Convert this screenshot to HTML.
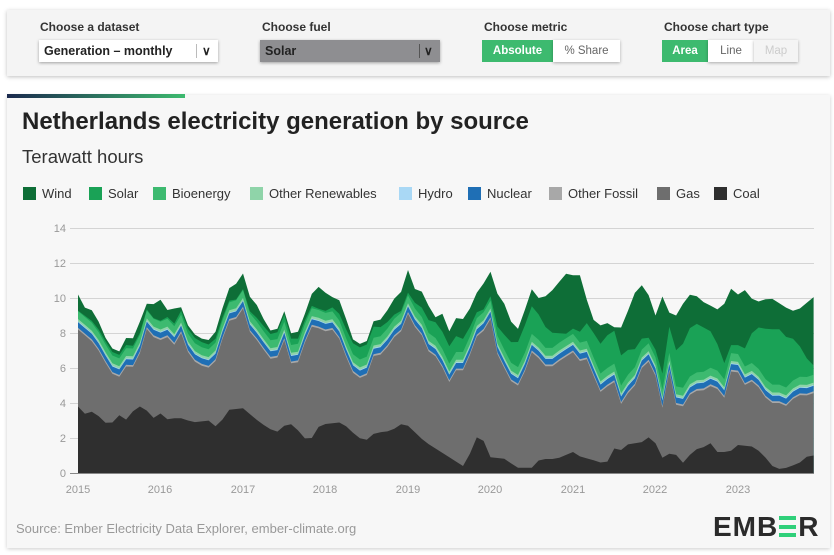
<!DOCTYPE html>
<html><head><meta charset="utf-8"><style>
body{margin:0;width:834px;height:555px;background:#fff;font-family:"Liberation Sans",sans-serif;position:relative;overflow:hidden}
.abs{position:absolute}
.panel{left:7px;top:10px;width:823px;height:66px;background:#f4f4f4;box-shadow:0 1px 4px rgba(0,0,0,.25)}
.lbl{font-size:12px;font-weight:bold;color:#333;top:20px}
.dd{top:40px;height:22px;box-shadow:0 1px 3px rgba(0,0,0,.35);font-size:12.5px;font-weight:bold;line-height:22px;padding-left:5px;box-sizing:border-box}
.btn{top:40px;height:22px;font-size:11.5px;font-weight:bold;line-height:22px;text-align:center;box-sizing:border-box}
.card{left:7px;top:95px;width:823px;height:453px;background:#f7f7f7;box-shadow:0 1px 4px rgba(0,0,0,.2)}
.leg{top:186px;font-size:13px;color:#333}
.sq{display:inline-block;width:13px;height:13px;vertical-align:-2px;margin-right:6px}
</style></head><body>
<div class="abs panel"></div>
<div class="abs lbl" style="left:40px">Choose a dataset</div>
<div class="abs lbl" style="left:262px">Choose fuel</div>
<div class="abs lbl" style="left:484px">Choose metric</div>
<div class="abs lbl" style="left:664px">Choose chart type</div>
<div class="abs dd" style="left:39px;width:179px;background:#fff;color:#222">Generation – monthly<span style="position:absolute;left:157px;top:4px;height:14px;border-left:1px solid #bbb"></span><span style="position:absolute;left:163px;top:0;font-size:12px">&#8744;</span></div>
<div class="abs dd" style="left:260px;width:180px;background:#8e8e91;color:#222">Solar<span style="position:absolute;left:159px;top:4px;height:14px;border-left:1px solid #555"></span><span style="position:absolute;left:164px;top:0;font-size:12px">&#8744;</span></div>
<div class="abs btn" style="left:482px;width:71px;background:#3dba6f;color:#fff">Absolute</div>
<div class="abs btn" style="left:553px;width:67px;background:#fff;color:#666;font-weight:normal;box-shadow:0 1px 3px rgba(0,0,0,.3)">% Share</div>
<div class="abs btn" style="left:662px;width:46px;background:#3dba6f;color:#fff">Area</div>
<div class="abs btn" style="left:708px;width:46px;background:#fff;color:#666;font-weight:normal;box-shadow:0 1px 3px rgba(0,0,0,.3)">Line</div>
<div class="abs btn" style="left:754px;width:44px;background:#f4f4f4;color:#ccc;font-weight:normal;box-shadow:0 1px 3px rgba(0,0,0,.3)">Map</div>
<div class="abs card"></div>
<div class="abs" style="left:7px;top:94px;width:178px;height:4px;background:linear-gradient(90deg,#1b2a4e,#3dba6f)"></div>
<div class="abs" style="left:22px;top:108px;font-size:24px;font-weight:bold;color:#222">Netherlands electricity generation by source</div>
<div class="abs" style="left:22px;top:146px;font-size:18.5px;color:#333">Terawatt hours</div>
<div class="abs leg" style="left:23px"><span class="sq" style="background:#0e6e37"></span>Wind</div>
<div class="abs leg" style="left:89px"><span class="sq" style="background:#1aa256"></span>Solar</div>
<div class="abs leg" style="left:153px"><span class="sq" style="background:#3dba70"></span>Bioenergy</div>
<div class="abs leg" style="left:250px"><span class="sq" style="background:#8fd4a9"></span>Other Renewables</div>
<div class="abs leg" style="left:399px"><span class="sq" style="background:#a9d8f5"></span>Hydro</div>
<div class="abs leg" style="left:468px"><span class="sq" style="background:#1f6fb5"></span>Nuclear</div>
<div class="abs leg" style="left:549px"><span class="sq" style="background:#a8a8a8"></span>Other Fossil</div>
<div class="abs leg" style="left:657px"><span class="sq" style="background:#6e6e6e"></span>Gas</div>
<div class="abs leg" style="left:714px"><span class="sq" style="background:#2f2f2f"></span>Coal</div>
<svg class="abs" style="left:0;top:0" width="834" height="555" id="ch" xmlns="http://www.w3.org/2000/svg">
<g font-family="Liberation Sans,sans-serif" font-size="11" fill="#999" text-anchor="end">
<text x="66" y="477">0</text><text x="66" y="442">2</text><text x="66" y="407">4</text><text x="66" y="372">6</text><text x="66" y="337">8</text><text x="66" y="302">10</text><text x="66" y="267">12</text><text x="66" y="232">14</text>
</g>
<g stroke="#d4d4d4" stroke-width="1">
<line x1="70" x2="814" y1="228.5" y2="228.5"/><line x1="70" x2="814" y1="263.5" y2="263.5"/><line x1="70" x2="814" y1="298.5" y2="298.5"/><line x1="70" x2="814" y1="333.5" y2="333.5"/><line x1="70" x2="814" y1="368.5" y2="368.5"/><line x1="70" x2="814" y1="403.5" y2="403.5"/><line x1="70" x2="814" y1="438.5" y2="438.5"/>
</g>
<g id="areas"></g>
<line x1="70" x2="814" y1="473.5" y2="473.5" stroke="#888"/>
<g font-family="Liberation Sans,sans-serif" font-size="11" fill="#999" text-anchor="middle">
<text x="78" y="493">2015</text><text x="160" y="493">2016</text><text x="243" y="493">2017</text><text x="325" y="493">2018</text><text x="408" y="493">2019</text><text x="490" y="493">2020</text><text x="573" y="493">2021</text><text x="655" y="493">2022</text><text x="738" y="493">2023</text>
</g>
</svg>
<div class="abs" style="left:16px;top:521px;font-size:13px;color:#999">Source: Ember Electricity Data Explorer, ember-climate.org</div>
<div class="abs" style="left:713px;top:511px;font-size:28px;font-weight:bold;color:#2b2b2b;letter-spacing:1px;white-space:nowrap">EMB<span style="display:inline-block;width:18px;height:21px;position:relative;vertical-align:-1px;margin:0 1px"><i style="position:absolute;left:0;top:0;width:17px;height:4px;background:#2fd07a"></i><i style="position:absolute;left:0;top:8.5px;width:17px;height:4px;background:#2fd07a"></i><i style="position:absolute;left:0;top:17px;width:17px;height:4px;background:#2fd07a"></i></span>R</div>
<script>
(function(){
function P(a){var o=[];for(var i=0;i<a.length;i+=2)o.push([a[i],a[i+1]]);return o}
var coal=P([2015.0,3.8,2015.1,3.3,2015.2,3.6,2015.3,2.9,2015.4,2.8,2015.5,3.3,2015.6,3.0,2015.7,3.8,2015.8,3.8,2015.9,3.1,2016.0,3.4,2016.1,3.0,2016.2,3.2,2016.4,2.9,2016.6,3.0,2016.7,2.5,2016.8,3.6,2017.0,3.7,2017.2,2.9,2017.4,2.3,2017.5,2.7,2017.6,2.8,2017.8,1.7,2017.9,2.6,2018.0,2.8,2018.2,2.9,2018.4,2.0,2018.5,1.9,2018.6,2.3,2018.8,2.4,2018.9,2.8,2019.0,2.7,2019.2,1.8,2019.4,1.2,2019.5,0.9,2019.6,0.6,2019.7,0.3,2019.8,1.9,2019.85,2.1,2019.95,1.7,2020.0,0.9,2020.2,0.8,2020.3,0.3,2020.5,0.3,2020.6,0.8,2020.8,0.8,2021.0,1.2,2021.1,0.9,2021.2,0.8,2021.4,0.5,2021.5,1.4,2021.6,1.3,2021.7,1.8,2021.8,1.6,2021.9,2.1,2022.0,1.7,2022.1,0.7,2022.2,1.3,2022.35,0.5,2022.45,1.3,2022.6,1.5,2022.7,1.8,2022.75,1.2,2022.9,1.2,2023.0,1.6,2023.2,1.5,2023.35,0.8,2023.45,0.2,2023.6,0.3,2023.75,0.6,2023.85,1.0,2024,1.0]);
var gas=P([2015.0,8.3,2015.1,7.9,2015.2,7.5,2015.3,6.7,2015.4,5.8,2015.5,5.6,2015.6,6.3,2015.7,6.1,2015.8,7.8,2015.85,8.6,2015.95,7.5,2016.0,7.7,2016.1,7.9,2016.15,7.3,2016.25,8.1,2016.35,6.8,2016.45,6.3,2016.6,6.1,2016.7,6.7,2016.8,8.8,2016.9,8.8,2017.0,9.5,2017.1,7.9,2017.2,7.6,2017.3,6.7,2017.4,6.5,2017.5,7.7,2017.6,6.1,2017.7,6.6,2017.8,8.5,2017.9,8.4,2018.0,8.2,2018.1,8.3,2018.2,7.5,2018.3,6.0,2018.4,5.5,2018.5,5.7,2018.6,7.0,2018.7,6.8,2018.8,7.8,2018.9,8.0,2019.0,9.2,2019.1,8.3,2019.2,7.8,2019.3,6.3,2019.35,7.0,2019.4,6.3,2019.5,5.3,2019.6,6.1,2019.7,5.9,2019.8,7.8,2019.9,8.1,2020.0,8.9,2020.1,6.5,2020.2,5.9,2020.3,4.8,2020.4,5.7,2020.5,7.0,2020.6,6.6,2020.7,6.0,2020.8,6.4,2020.9,6.7,2021.0,7.0,2021.1,6.4,2021.2,6.7,2021.3,4.6,2021.4,5.0,2021.5,5.3,2021.6,3.8,2021.7,5.1,2021.8,5.1,2021.85,6.6,2021.95,6.4,2022.03,5.2,2022.08,3.7,2022.15,6.3,2022.25,4.0,2022.35,3.9,2022.45,4.9,2022.55,4.7,2022.65,5.1,2022.75,4.9,2022.85,4.3,2022.95,6.7,2023.05,5.0,2023.15,5.4,2023.25,5.0,2023.35,4.3,2023.45,4.0,2023.55,4.2,2023.6,3.8,2023.7,4.6,2023.8,4.5,2023.9,4.6,2024,5.0]);
var tot=P([2015.0,10.2,2015.1,9.3,2015.2,9.3,2015.3,8.0,2015.4,7.1,2015.5,6.8,2015.6,7.9,2015.7,7.6,2015.8,9.7,2015.9,9.6,2016.0,9.9,2016.1,9.2,2016.2,9.5,2016.3,8.3,2016.4,7.6,2016.6,7.6,2016.7,8.3,2016.8,10.5,2016.9,10.7,2017.0,11.4,2017.1,9.8,2017.2,9.5,2017.3,8.1,2017.4,8.1,2017.5,8.9,2017.6,7.8,2017.7,8.2,2017.8,10.0,2017.9,10.7,2018.0,10.3,2018.1,10.0,2018.2,9.8,2018.3,7.8,2018.4,7.3,2018.5,7.5,2018.6,8.9,2018.7,8.7,2018.8,9.9,2018.9,10.1,2019.0,11.6,2019.1,10.3,2019.2,10.4,2019.3,8.7,2019.4,9.3,2019.5,8.1,2019.6,9.0,2019.7,8.7,2019.8,10.1,2019.9,10.7,2020.0,11.5,2020.1,10.0,2020.2,9.5,2020.3,7.8,2020.4,9.1,2020.5,10.5,2020.6,9.9,2020.7,10.2,2020.8,10.7,2020.9,11.4,2021.0,11.3,2021.1,11.3,2021.2,9.2,2021.3,8.3,2021.4,8.7,2021.5,7.9,2021.6,8.4,2021.7,9.7,2021.8,10.9,2021.9,10.4,2022.0,9.0,2022.1,10.3,2022.2,8.6,2022.3,9.4,2022.4,10.2,2022.5,10.1,2022.6,9.7,2022.7,9.5,2022.8,9.2,2022.9,10.6,2023.0,10.2,2023.1,10.5,2023.2,9.7,2023.3,9.9,2023.4,10.0,2023.5,9.7,2023.6,9.4,2023.7,9.2,2023.8,9.6,2023.9,10.0,2024,10.3]);
function I(a,t){for(var i=0;i<a.length-1;i++){if(t<=a[i+1][0]){var f=(t-a[i][0])/(a[i+1][0]-a[i][0]);return a[i][1]+f*(a[i+1][1]-a[i][1])}}return a[a.length-1][1]}
var peak={2015:0.2,2016:0.3,2017:0.4,2018:0.7,2019:1.0,2020:1.6,2021:1.9,2022:2.8,2023:3.2};
var N=108,ts=[];for(var m=0;m<N;m++){ts.push(2015+m/12)}
var cols=['#2f2f2f','#6e6e6e','#a8a8a8','#1f6fb5','#a9d8f5','#8fd4a9','#3dba70','#1aa256','#0e6e37'];
var cum=[];for(var k=0;k<9;k++)cum.push([]);
ts.forEach(function(t){var c=I(coal,t),g=Math.max(I(gas,t),c+0.3),tp=I(tot,t);var y=Math.floor(t+1e-9),fr=t-y;
var sol=peak[y]*(0.12+0.88*Math.pow(Math.max(0,Math.sin(Math.PI*(fr+0.04))),1.5));
var vals=[c,g-0.1,g,g+0.32,g+0.36,g+0.5,g+0.95,g+0.95+sol];vals.push(Math.max(tp,vals[7]+0.2));
for(var k=0;k<9;k++)cum[k].push(vals[k])});
function X(i){return 78+i*82.5/12}function Y(v){return 473-v*17.5}
var g=document.getElementById('areas'),ns='http://www.w3.org/2000/svg';
for(var k=8;k>=0;k--){var d='M78 473';for(var i=0;i<N;i++)d+=' L'+X(i).toFixed(1)+' '+Y(cum[k][i]).toFixed(1);d+=' L'+X(N-1).toFixed(1)+' 473Z';
var p=document.createElementNS(ns,'path');p.setAttribute('d',d);p.setAttribute('fill',cols[k]);g.appendChild(p)}
})();
</script>
</body></html>
